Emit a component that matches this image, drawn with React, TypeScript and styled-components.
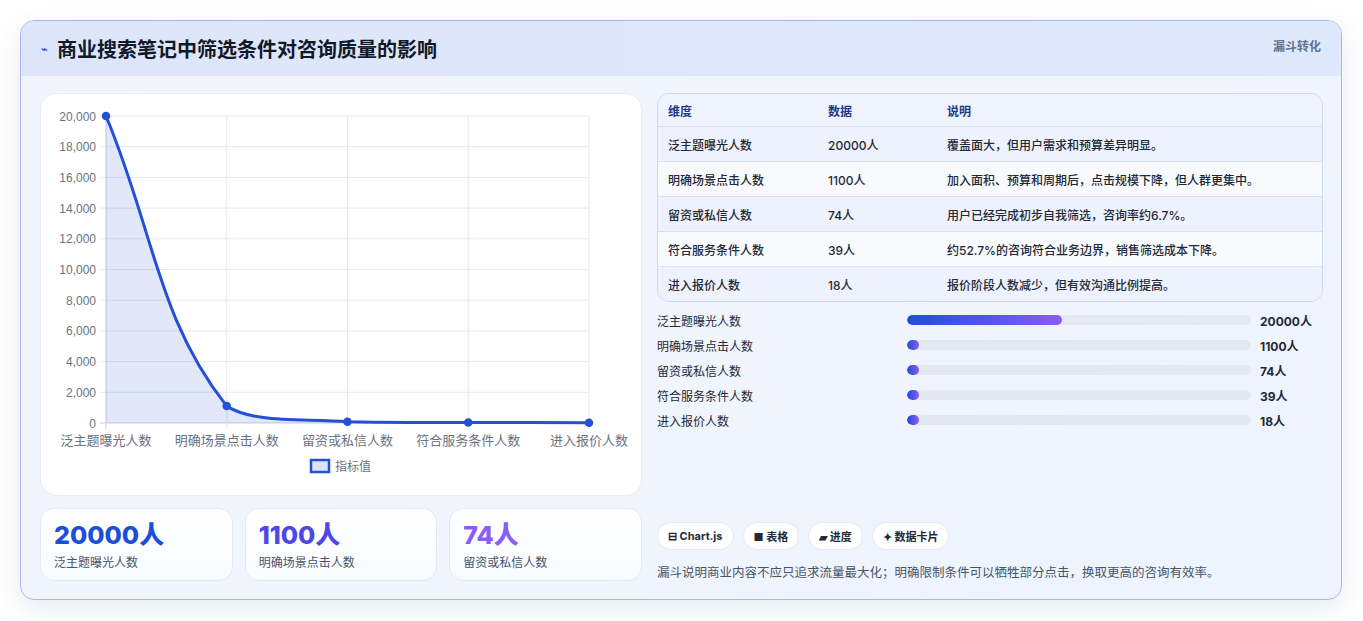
import React from "react";
import styled, { createGlobalStyle } from "styled-components";

const Global = createGlobalStyle`
  html, body { margin: 0; padding: 0; background: #f3f4f6; }
  body { font-family: Inter, "Noto Sans CJK SC", "Noto Sans", sans-serif; }
  * { box-sizing: border-box; }
`;

const Page = styled.div`
  width: 1363px; height: 621px; padding: 20px 21px 21px 20px; background: #ffffff;
`;
const Card = styled.div`
  width: 1322px; height: 580px; border: 1px solid #a9b8ec; border-radius: 14px; overflow: hidden;
  background: linear-gradient(135deg, #f3f5fd 0%, #edf4fe 100%);
  box-shadow: 0 8px 24px rgba(60, 80, 140, 0.12);
  display: flex; flex-direction: column;
`;
const Header = styled.div`
  height: 55px; background: linear-gradient(90deg, #dde5fb, #dfe9fd);
  display: flex; align-items: center; padding: 0 20px; position: relative;
`;
const Title = styled.h1`
  margin: 0; font-size: 20px; font-weight: 700; color: #111827; display: flex; align-items: center; gap: 9px;
`;
const Spark = styled.span` font-size: 11px; color: #3b5bdb; `;
const Tag = styled.span`
  position: absolute; right: 20px; top: 16px; font-size: 12px; font-weight: 700; color: #64748b;
`;
const Body = styled.div`
  display: grid; grid-template-columns: 602px 666px; gap: 15px; padding: 17px 19px 0 19px;
`;
const Col = styled.div` display: flex; flex-direction: column; `;
const ChartCard = styled.div`
  height: 403px; background: #fff; border: 1px solid #e6ebf5; border-radius: 16px;
`;
const Kpis = styled.div` display: grid; grid-template-columns: repeat(3, 1fr); gap: 12px; margin-top: 12px; `;
const Kpi = styled.div`
  height: 73px; border: 1px solid #e3e9f6; border-radius: 14px; background: linear-gradient(180deg,#fff,#f8fbff);
  padding: 10px 13px;
`;
const KpiVal = styled.div<{ c: string }>` font-size: 25px; font-weight: 800; color: ${p => p.c}; line-height: 32px; `;
const KpiLbl = styled.div` font-size: 12px; color: #475569; margin-top: 2px; `;

const Table = styled.div`
  border: 1px solid #cfd9ee; border-radius: 12px; overflow: hidden; background: #eef3fe;
`;
const Row = styled.div<{ head?: boolean; alt?: boolean }>`
  display: grid; grid-template-columns: 160px 119px 1fr; height: ${p => p.head ? 32 : 35}px; align-items: center;
  padding-left: 10px; font-size: 12px; font-weight: ${p => p.head ? 700 : 500};
  color: ${p => p.head ? "#1e3a8a" : "#1f2937"};
  background: ${p => p.head ? "#eef3fe" : p.alt ? "#f8fafd" : "#eef2fd"};
  border-top: ${p => p.head ? "none" : "1px solid #d8e1f2"};
`;
const Bars = styled.div` display: flex; flex-direction: column; gap: 7px; margin-top: 9px; `;
const BarRow = styled.div`
  display: grid; grid-template-columns: 250px 344px 1fr; align-items: center; height: 18px; font-size: 12px; color: #1f2937;
`;
const Track = styled.div` height: 10px; border-radius: 5px; background: #e3e8f1; overflow: hidden; `;
const Fill = styled.div` height: 100%; border-radius: 5px; background: linear-gradient(90deg, #1d4ed8, #8b5cf6); min-width: 12px; `;
const BarVal = styled.span` font-weight: 700; padding-left: 9px; `;
const Chips = styled.div` display: flex; gap: 9px; margin-top: 93px; `;
const Chip = styled.span`
  height: 28px; padding: 0 10px; border-radius: 14px; background: #fff; border: 1px solid #e5e9f2;
  font-size: 11px; font-weight: 700; color: #1f2937; display: flex; align-items: center; gap: 3px;
`;
const Note = styled.div` font-size: 12.5px; color: #475569; margin-top: 12px; `;

const labels = ["泛主题曝光人数", "明确场景点击人数", "留资或私信人数", "符合服务条件人数", "进入报价人数"];
const values = [20000, 1100, 74, 39, 18];
const notes = ["覆盖面大，但用户需求和预算差异明显。", "加入面积、预算和周期后，点击规模下降，但人群更集中。", "用户已经完成初步自我筛选，咨询率约6.7%。", "约52.7%的咨询符合业务边界，销售筛选成本下降。", "报价阶段人数减少，但有效沟通比例提高。"];

const X0 = 65, X1 = 548, Y0 = 22, Y1 = 329;
const pts = values.map((v, i) => ({ x: X0 + (X1 - X0) * i / 4, y: Y1 - (Y1 - Y0) * v / 20000 }));
function path() {
  const t = 0.4;
  const cps = pts.map((p, i) => {
    const pr = pts[i - 1] || p, nx = pts[i + 1] || p;
    const d01 = Math.hypot(p.x - pr.x, p.y - pr.y), d12 = Math.hypot(nx.x - p.x, nx.y - p.y);
    const s = d01 + d12 || 1;
    const fa = t * d01 / s, fb = t * d12 / s;
    const cl = (y: number) => Math.min(Y1, Math.max(Y0, y));
    return {
      a: { x: p.x - fa * (nx.x - pr.x), y: cl(p.y - fa * (nx.y - pr.y)) },
      b: { x: p.x + fb * (nx.x - pr.x), y: cl(p.y + fb * (nx.y - pr.y)) },
    };
  });
  let d = `M${pts[0].x},${pts[0].y}`;
  for (let i = 1; i < pts.length; i++) d += ` C${cps[i - 1].b.x},${cps[i - 1].b.y} ${cps[i].a.x},${cps[i].a.y} ${pts[i].x},${pts[i].y}`;
  return d;
}

function Chart() {
  const d = path();
  return (
    <svg width="602" height="403" style={{ display: "block" }} fontFamily='"Liberation Sans", "Noto Sans CJK SC", sans-serif'>
      {Array.from({ length: 11 }).map((_, i) => {
        const y = Y1 - (Y1 - Y0) * i / 10;
        return <g key={i}>
          <line x1={X0 - 6} x2={X1} y1={y} y2={y} stroke={i === 0 ? "#c8cfdc" : "#e5e9f0"} />
          <text x={X0 - 10} y={y + 4.5} fontSize="12" textAnchor="end" fill="#6b7280">{(i * 2000).toLocaleString("en-US")}</text>
        </g>;
      })}
      {pts.map((p, i) => <line key={i} x1={p.x} x2={p.x} y1={Y0} y2={Y1 + 6} stroke={i === 0 ? "#c8cfdc" : "#e5e9f0"} />)}
      <path d={`${d} L${X1},${Y1} L${X0},${Y1} Z`} fill="rgba(59,91,219,0.15)" />
      <path d={d} fill="none" stroke="#2450d6" strokeWidth="3" />
      {pts.map((p, i) => <circle key={i} cx={p.x} cy={p.y} r="3.5" fill="#2450d6" stroke="#2450d6" strokeWidth="1.5" />)}
      {pts.map((p, i) => <text key={i} x={p.x} y={351} fontSize="13" textAnchor="middle" fill="#6b7280" fontFamily='"Noto Sans CJK SC", sans-serif'>{labels[i]}</text>)}
      <rect x="270" y="366" width="18" height="12" fill="#dde4f7" stroke="#2450d6" strokeWidth="2.5" />
      <text x="294" y="377" fontSize="12" fill="#6b7280" fontFamily='"Noto Sans CJK SC", sans-serif'>指标值</text>
    </svg>
  );
}

export default function App() {
  return (
    <Page>
      <Global />
      <Card>
        <Header>
          <Title><Spark>⌁</Spark>商业搜索笔记中筛选条件对咨询质量的影响</Title>
          <Tag>漏斗转化</Tag>
        </Header>
        <Body>
          <Col>
            <ChartCard><Chart /></ChartCard>
            <Kpis>
              <Kpi><KpiVal c="#1d4ed8">20000人</KpiVal><KpiLbl>泛主题曝光人数</KpiLbl></Kpi>
              <Kpi><KpiVal c="#4f46e5">1100人</KpiVal><KpiLbl>明确场景点击人数</KpiLbl></Kpi>
              <Kpi><KpiVal c="#8b5cf6">74人</KpiVal><KpiLbl>留资或私信人数</KpiLbl></Kpi>
            </Kpis>
          </Col>
          <Col>
            <Table>
              <Row head><span>维度</span><span>数据</span><span>说明</span></Row>
              {labels.map((l, i) => <Row key={l} alt={i % 2 === 1}><span>{l}</span><span>{values[i]}人</span><span>{notes[i]}</span></Row>)}
            </Table>
            <Bars>
              {labels.map((l, i) => (
                <BarRow key={l}>
                  <span>{l}</span>
                  <Track><Fill style={{ width: `${values[i] / 20000 * 45}%` }} /></Track>
                  <BarVal>{values[i]}人</BarVal>
                </BarRow>
              ))}
            </Bars>
            <Chips>
              <Chip>⊟ Chart.js</Chip><Chip>■ 表格</Chip><Chip>▰ 进度</Chip><Chip>✦ 数据卡片</Chip>
            </Chips>
            <Note>漏斗说明商业内容不应只追求流量最大化；明确限制条件可以牺牲部分点击，换取更高的咨询有效率。</Note>
          </Col>
        </Body>
      </Card>
    </Page>
  );
}
